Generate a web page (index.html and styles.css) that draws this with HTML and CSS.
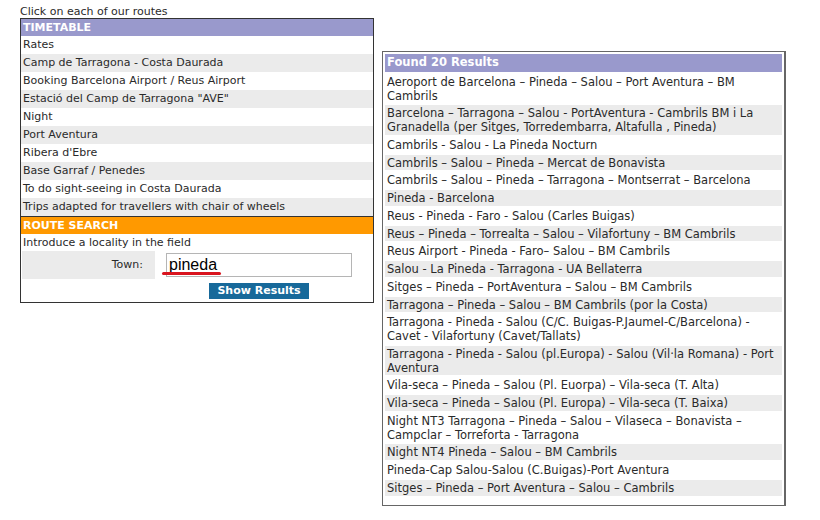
FILE: index.html
```html
<!DOCTYPE html>
<html lang="en">
  <head>
    <meta charset="UTF-8" />
    <meta name="viewport" content="width=device-width, initial-scale=1.0" />
    <title>Routes - Timetable</title>
    <link rel="stylesheet" href="styles.css">
  </head>
  <body>
    <div class="page">
      <div class="left-col">
        <div class="intro">Click on each of our routes</div>
        <div class="panel">
          <div class="panel-head">TIMETABLE</div>
          <ul class="links">
            <li>Rates</li>
            <li class="alt">Camp de Tarragona - Costa Daurada</li>
            <li>Booking Barcelona Airport / Reus Airport</li>
            <li class="alt">Estació del Camp de Tarragona "AVE"</li>
            <li>Night</li>
            <li class="alt">Port Aventura</li>
            <li>Ribera d'Ebre</li>
            <li class="alt">Base Garraf / Penedes</li>
            <li>To do sight-seeing in Costa Daurada</li>
            <li class="alt">Trips adapted for travellers with chair of wheels</li>
          </ul>
          <div class="panel-head search-head">ROUTE SEARCH</div>
          <div class="hint">Introduce a locality in the field</div>
          <div class="town-row">
            <div class="town-label">Town:</div>
            <div class="town-field">
              <input type="text" id="town" value="pineda" />
              <span class="spell"></span>
            </div>
          </div>
          <div class="btn-row">
            <button>Show Results</button>
          </div>
        </div>
      </div>

      <div class="results">
        <table class="results-table">
          <tr><th>Found 20 Results</th></tr>
          <tr><td>Aeroport de Barcelona – Pineda – Salou – Port Aventura – BM Cambrils</td></tr>
          <tr class="alt"><td>Barcelona – Tarragona – Salou - PortAventura - Cambrils BM i La Granadella (per Sitges, Torredembarra, Altafulla , Pineda)</td></tr>
          <tr><td>Cambrils - Salou - La Pineda Nocturn</td></tr>
          <tr class="alt"><td>Cambrils – Salou – Pineda – Mercat de Bonavista</td></tr>
          <tr><td>Cambrils – Salou – Pineda – Tarragona – Montserrat – Barcelona</td></tr>
          <tr class="alt"><td>Pineda - Barcelona</td></tr>
          <tr><td>Reus - Pineda - Faro - Salou (Carles Buigas)</td></tr>
          <tr class="alt"><td>Reus – Pineda – Torrealta – Salou – Vilafortuny – BM Cambrils</td></tr>
          <tr><td>Reus Airport - Pineda - Faro– Salou – BM Cambrils</td></tr>
          <tr class="alt"><td>Salou - La Pineda - Tarragona - UA Bellaterra</td></tr>
          <tr><td>Sitges – Pineda – PortAventura – Salou – BM Cambrils</td></tr>
          <tr class="alt"><td>Tarragona – Pineda – Salou – BM Cambrils (por la Costa)</td></tr>
          <tr><td>Tarragona - Pineda - Salou (C/C. Buigas-P.JaumeI-C/Barcelona) - Cavet - Vilafortuny (Cavet/Tallats)</td></tr>
          <tr class="alt"><td>Tarragona - Pineda - Salou (pl.Europa) - Salou (Vil·la Romana) - Port Aventura</td></tr>
          <tr><td>Vila-seca – Pineda – Salou (Pl. Euorpa) – Vila-seca (T. Alta)</td></tr>
          <tr class="alt"><td>Vila-seca – Pineda – Salou (Pl. Europa) – Vila-seca (T. Baixa)</td></tr>
          <tr><td>Night NT3 Tarragona – Pineda – Salou – Vilaseca – Bonavista – Campclar – Torreforta - Tarragona</td></tr>
          <tr class="alt"><td>Night NT4 Pineda – Salou – BM Cambrils</td></tr>
          <tr><td>Pineda-Cap Salou-Salou (C.Buigas)-Port Aventura</td></tr>
          <tr class="alt"><td>Sitges – Pineda – Port Aventura – Salou – Cambrils</td></tr>
        </table>
      </div>
    </div>
  </body>
</html>
```

FILE: styles.css
```css
body {
  font-family: "DejaVu Sans", Verdana, sans-serif;
  font-size: 11px;
  line-height: 14px;
  color: #2a2a2a;
  background-color: #fff;
  margin: 0;
}

.page {
  display: flex;
  align-items: flex-start;
  gap: 8px;
  padding: 5px 0 0 20px;
}

.left-col {
  width: 354px;
}

.intro {
  height: 13px;
}

.panel {
  border: 1px solid #333;
}

.panel-head {
  background-color: #9999cc;
  color: #fff;
  font-weight: bold;
  padding: 2px 2px 1px;
}

.search-head {
  background-color: #ff9900;
  border-top: 1px solid #333;
}

.links {
  list-style: none;
  margin: 0;
  padding: 0;
}

.links li {
  padding: 2px 2px;
}

.links li.alt {
  background-color: #ebebeb;
}

.hint {
  padding: 2px 2px 1px;
}

.town-row {
  display: flex;
  height: 28px;
}

.town-label {
  width: 121px;
  padding-right: 12px;
  margin-left: 1px;
  background-color: #ebebeb;
  text-align: right;
  line-height: 28px;
}

.town-field {
  position: relative;
  padding: 2px 0 0 11px;
}

.town-field input {
  width: 186px;
  height: 24px;
  box-sizing: border-box;
  border: 1px solid #b5b5b5;
  padding: 0 2px;
  margin: 0;
  font-family: "Liberation Sans", Arial, sans-serif;
  font-size: 16px;
  color: #000;
}

.spell {
  position: absolute;
  left: 7px;
  top: 21px;
  width: 59px;
  height: 3px;
  border-radius: 2px;
  background-color: #d9141e;
}

.btn-row {
  padding: 4px 0 3px 188px;
}

button {
  width: 100px;
  height: 16px;
  padding: 0;
  border: none;
  background-color: #17699a;
  color: #fff;
  font-family: "DejaVu Sans", Verdana, sans-serif;
  font-size: 11px;
  font-weight: bold;
  line-height: 16px;
  display: block;
}

.results {
  margin-top: 46px;
  width: 401px;
  border: 1px solid #666;
  border-right-width: 2px;
  padding-bottom: 7px;
  font-size: 11.5px;
  line-height: 13.75px;
}

.results-table {
  width: 100%;
  border-spacing: 2px;
}

.results-table th {
  background-color: #9999cc;
  color: #fff;
  font-weight: bold;
  text-align: left;
  padding: 2px 2px;
}

.results-table td {
  padding: 2px 2px 0;
  vertical-align: top;
}

.results-table tr.alt td {
  background-color: #ebebeb;
}
```
